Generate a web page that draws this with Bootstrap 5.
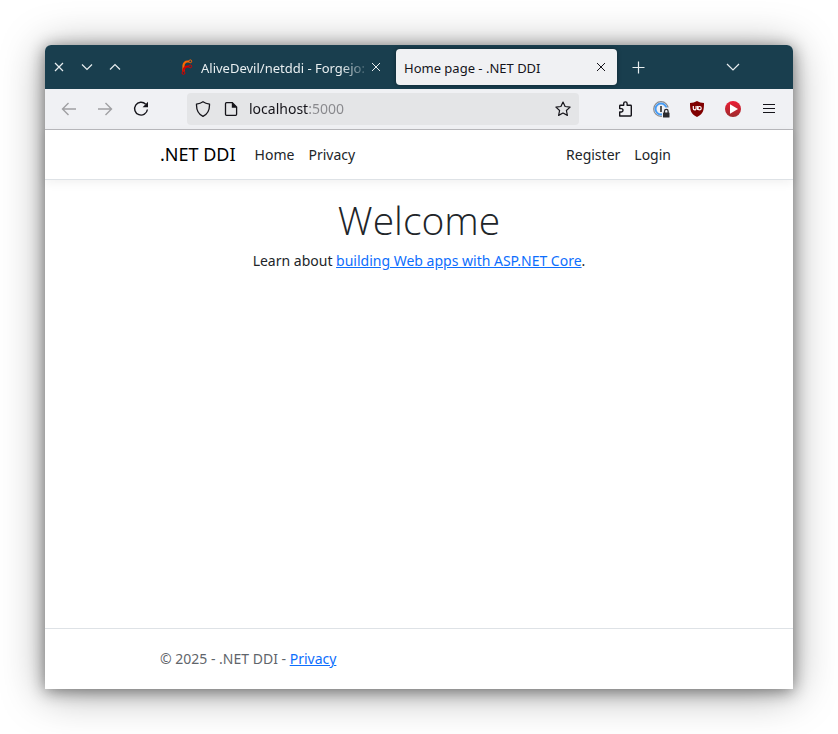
<!DOCTYPE html>
<html lang="en">
<head>
<meta charset="utf-8">
<meta name="viewport" content="width=device-width, initial-scale=1">
<title>Home page - .NET DDI</title>
<link href="https://cdn.jsdelivr.net/npm/bootstrap@5.3.0/dist/css/bootstrap.min.css" rel="stylesheet">
<style>
html { font-size: 14px; }
body { font-family: "Noto Sans", sans-serif; font-size: 14px; padding: 45px; }
.window { border-radius: 6px 6px 0 0; box-shadow: 0 4px 44px rgba(0,0,0,.36), 0 2px 16px rgba(0,0,0,.46); }
.titlebar { height: 44px; background: #193e4e; border-radius: 6px 6px 0 0; color: #e8eef0; }
.titlebar button, .toolbar button { border: 0; background: none; padding: 0; color: inherit; display: grid; place-items: center; flex: none; }
svg { display: block; fill: none; stroke: currentColor; }
.win-btn { width: 28px; height: 28px; }
.tabs { margin-left: 42px; gap: 4px; font-size: 13px; }
.browser-tab { width: 221px; height: 36px; border-radius: 4px; padding: 0 8px; }
.browser-tab.current { background: #f0f1f3; color: #15141a; box-shadow: 0 0 4px rgba(0,0,0,.4); }
.tab-icon { margin-right: 6px; }
.tab-close { width: 16px; height: 16px; }
.tab-title { white-space: nowrap; line-height: 20px; margin-top: 2px; }
.fade-end { -webkit-mask-image: linear-gradient(to left, rgba(0,0,0,.2), #000 24px); mask-image: linear-gradient(to left, rgba(0,0,0,.2), #000 24px); }
.new-tab { width: 36px; height: 36px; }
.all-tabs { width: 36px; height: 36px; margin-right: 42px; }
.toolbar { height: 41px; background: #f0f1f4; border-bottom: 1px solid #b9b9bd; color: #15141a; padding: 0 6px; }
.toolbar .tool { width: 36px; height: 32px; }
.toolbar .tool:disabled { color: #a0a0a3; }
.address { background: #e4e5e7; height: 32px; border-radius: 4px; margin: 0 28px; padding: 0 8px; }
.page-info { margin: 0 10px 0 12px; }
.address input { border: 0; outline: 0; padding: 0; height: 22px; margin-bottom: 2px; min-width: 0; font-size: 14px; color: transparent; background: linear-gradient(to right, #15141a 60px, #88888c 60px); -webkit-background-clip: text; background-clip: text; }
.site-container { max-width: 538px; padding: 0 10px; }
.site-header { height: 50px; border-bottom: 1px solid #dee2e6; box-shadow: 0 3px 10px rgba(0,0,0,.06); }
.site-header .navbar-brand { font-size: 18px; margin-right: 12px; padding: 0; color: #000; }
.site-header .nav-link { padding: 7px; }
.welcome { font-family: "Open Sans", "Noto Sans", sans-serif; font-size: 39px; font-weight: 300; line-height: 48px; margin-bottom: 6px; }
.page-content { padding-top: 16px; }
.page-content p { line-height: 21px; }
.site-footer { line-height: 60px; border-top: 1px solid #dee2e6; color: #5f656b; }
.page-content a, .site-footer a { color: #0d6efd; }
</style>
</head>
<body class="min-vh-100 d-flex flex-column">
<div class="window bg-white flex-fill d-flex flex-column">
  <div class="titlebar d-flex align-items-center">
    <div class="d-flex">
      <button class="win-btn" aria-label="Close window"><svg width="10" height="10" viewBox="0 0 10 10"><path d="M1 1l8 8M9 1L1 9" stroke-width="1.200"/></svg></button>
      <button class="win-btn" aria-label="Minimize"><svg width="12" height="8" viewBox="0 0 12 8"><path d="M1 1.500l5 5 5-5" stroke-width="1.200"/></svg></button>
      <button class="win-btn" aria-label="Maximize"><svg width="12" height="8" viewBox="0 0 12 8"><path d="M1 6.500l5-5 5 5" stroke-width="1.200"/></svg></button>
    </div>
    <div class="tabs d-flex">
      <div class="browser-tab d-flex align-items-center">
        <svg class="tab-icon flex-shrink-0" width="16" height="16" viewBox="0 0 16 16"><path d="M4.500 12.500V6.500a4 4 0 0 1 4-4H10" stroke="#f60" stroke-width="2.200"/><path d="M4.500 12.500v-1a4 4 0 0 1 4-4H10" stroke="#d40000" stroke-width="2.200"/><circle cx="11.300" cy="2.300" r="1.400" stroke="#f60"/><circle cx="11.300" cy="7.400" r="1.400" stroke="#d40000"/><circle cx="4.500" cy="14" r="1.400" stroke="#d40000"/></svg>
        <span class="tab-title fade-end">AliveDevil/netddi - Forgejo:</span>
        <button class="tab-close ms-auto" aria-label="Close tab"><svg width="10" height="10" viewBox="0 0 10 10"><path d="M1 1l8 8M9 1L1 9"/></svg></button>
      </div>
      <div class="browser-tab current d-flex align-items-center">
        <span class="tab-title">Home page - .NET DDI</span>
        <button class="tab-close ms-auto" aria-label="Close tab"><svg width="10" height="10" viewBox="0 0 10 10"><path d="M1 1l8 8M9 1L1 9"/></svg></button>
      </div>
    </div>
    <button class="new-tab ms-1" aria-label="New tab"><svg width="13" height="13" viewBox="0 0 13 13"><path d="M6.500 .5v12M.5 6.500h12" stroke-width="1.200"/></svg></button>
    <button class="all-tabs ms-auto" aria-label="List all tabs"><svg width="14" height="8" viewBox="0 0 14 8"><path d="M1 1l6 6 6-6" stroke-width="1.200"/></svg></button>
  </div>
  <div class="toolbar d-flex align-items-center">
    <button class="tool" disabled aria-label="Back"><svg width="16" height="16" viewBox="0 0 16 16"><path d="M15 8H1.500M7.500 2l-6 6 6 6" stroke-width="1.400"/></svg></button>
    <button class="tool" disabled aria-label="Forward"><svg width="16" height="16" viewBox="0 0 16 16"><path d="M1 8h13.500M8.500 2l6 6-6 6" stroke-width="1.400"/></svg></button>
    <button class="tool" aria-label="Reload"><svg width="16" height="16" viewBox="0 0 16 16"><path d="M12.700 3.300A6.400 6.400 0 1 0 14.400 8.500" stroke-width="1.400"/><path d="M15 .8v5.400H9.600z" fill="currentColor" stroke="none"/></svg></button>
    <div class="address d-flex align-items-center flex-fill">
      <svg class="flex-shrink-0" width="16" height="16" viewBox="0 0 16 16"><path d="M8 .8c2 1.400 4 2 6.500 2.400C14.700 9 12.800 13 8 15.300 3.200 13 1.300 9 1.500 3.200 4 2.800 6 2.200 8 .8z" stroke-width="1.300"/></svg>
      <svg class="page-info flex-shrink-0" width="16" height="16" viewBox="0 0 16 16"><path d="M3.500 1.700h5.800l4.300 4.300v7.300a1 1 0 0 1-1 1H3.500a1 1 0 0 1-1-1V2.700a1 1 0 0 1 1-1z" stroke-width="1.300"/><path d="M8.800 1.200v5.500h5.400z" fill="currentColor" stroke="none"/></svg>
      <input class="flex-fill" type="text" value="localhost:5000" aria-label="Address">
      <button aria-label="Bookmark this page"><svg width="16" height="16" viewBox="0 0 16 16"><path d="M8 1l2.100 4.500 5 .6-3.700 3.400 1 4.900L8 12l-4.400 2.400 1-4.900L.9 6.100l5-.6z" stroke-width="1.200" stroke-linejoin="round"/></svg></button>
    </div>
    <button class="tool" aria-label="Extensions"><svg width="16" height="16" viewBox="0 0 16 16"><path d="M2.700 15V11h1.600a1.700 1.700 0 0 0 0-3.400H2.700V5a.7.7 0 0 1 .7-.7h3.300V2.600a1.700 1.700 0 0 1 3.400 0v1.700h3.500a.7.7 0 0 1 .7.700v9.300a.7.7 0 0 1-.7.7z" stroke-width="1.400" stroke-linejoin="round"/></svg></button>
    <button class="tool" aria-label="Password manager"><svg width="17" height="17" viewBox="0 0 17 17"><circle cx="8" cy="8" r="7.300" stroke="#8b8b8e" stroke-width="1.200"/><circle cx="8" cy="8" r="5.500" stroke="#459bf5" stroke-width="2"/><path d="M8 5v6" stroke="#555" stroke-width="2"/><path d="M9 17V9l3-2.500h5V17z" fill="#f0f1f4" stroke="none"/><rect x="10" y="11.500" width="6.500" height="5" rx=".6" fill="#2b2b2f" stroke="none"/><path d="M11.500 12v-1.800a1.800 1.800 0 0 1 3.600 0V12" stroke="#2b2b2f" stroke-width="1.300"/></svg></button>
    <button class="tool" aria-label="uBlock Origin"><svg width="16" height="16" viewBox="0 0 16 16"><path d="M8 0c2 1.300 4.500 2 7 2 0 7-.5 11-7 14C1.500 13 1 9 1 2c2.500 0 5-.7 7-2z" fill="#800000" stroke="none"/><path d="M4.300 5v2.500a1.400 1.400 0 0 0 2.800 0V5M8.700 5v4" stroke="#fff" stroke-width="1.200"/><circle cx="10.500" cy="7.200" r="1.700" stroke="#fff" stroke-width="1.200"/></svg></button>
    <button class="tool" aria-label="Video extension"><svg width="16" height="16" viewBox="0 0 16 16"><defs><linearGradient id="redDisc" x2="0" y2="1"><stop stop-color="#ed1c34"/><stop offset="1" stop-color="#9e2b2d"/></linearGradient></defs><circle cx="8" cy="8" r="8" fill="url(#redDisc)" stroke="none"/><path d="M5 3.200v9.600L13 8z" fill="#fff" stroke="none"/></svg></button>
    <button class="tool" aria-label="Application menu"><svg width="14" height="12" viewBox="0 0 14 12"><path d="M1 1.500h12M1 5.500h12M1 9.500h12" stroke-width="1.200"/></svg></button>
  </div>
  <header class="site-header navbar navbar-expand navbar-light p-0">
    <div class="container site-container">
      <a class="navbar-brand" href="#">.NET DDI</a>
      <nav class="navbar-nav flex-fill">
        <a class="nav-link text-dark" href="#">Home</a>
        <a class="nav-link text-dark" href="#">Privacy</a>
        <a class="nav-link text-dark ms-auto" href="#">Register</a>
        <a class="nav-link text-dark" href="#">Login</a>
      </nav>
    </div>
  </header>
  <main class="page-content container site-container flex-fill text-center">
    <h1 class="welcome">Welcome</h1>
    <p>Learn about <a href="#">building Web apps with ASP.NET Core</a>.</p>
  </main>
  <footer class="site-footer">
    <div class="container site-container">© 2025 - .NET DDI - <a href="#">Privacy</a></div>
  </footer>
</div>
<script src="https://cdn.jsdelivr.net/npm/bootstrap@5.3.0/dist/js/bootstrap.bundle.min.js"></script>
</body>
</html>
